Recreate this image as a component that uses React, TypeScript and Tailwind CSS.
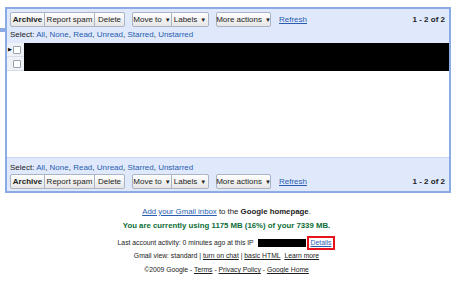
import React from "react";

const btn =
  "h-[15px] px-[5px] flex items-center border border-[#a9b4c4] bg-gradient-to-b from-white to-[#e6e6e6] text-[8px] text-[#222] leading-none whitespace-nowrap";

function Caret() {
  return <span className="ml-[3px] text-[6px]">▼</span>;
}

function Toolbar() {
  return (
    <div className="flex items-center pl-[3px] pr-[4px] h-[15px]">
      <div className="flex">
        <button className={`${btn} font-bold rounded-l-[2px] w-[35px] justify-center`}>Archive</button>
        <button className={`${btn} -ml-px w-[51px] justify-center`}>Report spam</button>
        <button className={`${btn} -ml-px rounded-r-[2px] w-[31px] justify-center`}>Delete</button>
      </div>
      <div className="flex ml-[7px]">
        <button className={`${btn} rounded-l-[2px] w-[40px] justify-center`}>
          Move to<Caret />
        </button>
        <button className={`${btn} -ml-px rounded-r-[2px] w-[38px] justify-center`}>
          Labels<Caret />
        </button>
      </div>
      <button className={`${btn} ml-[7px] rounded-[2px] w-[55px] justify-center`}>
        More actions<Caret />
      </button>
      <a className="ml-[8px] text-[8px] text-[#2a5db0] underline">Refresh</a>
      <span className="ml-auto text-[8px] font-bold text-[#222]">1 - 2 of 2</span>
    </div>
  );
}

function SelectLine() {
  const items = ["All", "None", "Read", "Unread", "Starred", "Unstarred"];
  return (
    <div className="pl-[3px] text-[8px] leading-none text-[#222]">
      Select:{" "}
      {items.map((t, i) => (
        <span key={t}>
          <a className="text-[#2a5db0]">{t}</a>
          {i < items.length - 1 ? ", " : ""}
        </span>
      ))}
    </div>
  );
}

function Row({ first }: { first?: boolean }) {
  return (
    <div className="flex h-[14px]">
      <div className="w-[17px] flex items-center bg-[#eef1f6] border-b border-[#d6dde8]">
        <span className="w-[4px] text-[5px] leading-none text-black pl-[1px]">{first ? "▶" : ""}</span>
        <span className="ml-[2px] w-[8px] h-[8px] border border-[#9aa3ad] rounded-[1px] bg-white" />
      </div>
      <div className="flex-1 bg-black" />
    </div>
  );
}

export default function App() {
  return (
    <div className="w-[453px] h-[285px] bg-white font-['Liberation_Sans',Arial,sans-serif] overflow-hidden">
      <div className="flex items-start pt-[7px] pr-[2px]">
        <div className="mt-[21px] w-[5px] h-[4px] bg-[#8aabe4]" />
        <div className="flex-1 border-2 border-[#8aabe4] bg-[#dfe9fb]">
          <div className="pt-[3px]">
            <Toolbar />
          </div>
          <div className="h-[16px] flex items-center">
            <SelectLine />
          </div>
          <div className="bg-white h-[114px]">
            <Row first />
            <Row />
          </div>
          <div className="border-t border-[#c9d8f2] pt-[4px] pb-[2px]">
            <div className="h-[11px] flex items-center">
              <SelectLine />
            </div>
            <div className="mt-[1px]">
              <Toolbar />
            </div>
          </div>
        </div>
      </div>

      <div className="flex flex-col items-center text-[#222] mt-[15px]">
        <div className="text-[7.8px] leading-none">
          <a className="text-[#2a5db0] underline">Add your Gmail inbox</a> to the{" "}
          <b>Google homepage</b>.
        </div>
        <div className="mt-[6px] text-[7.8px] leading-none font-bold text-[#0b6e35]">
          You are currently using 1175 MB (16%) of your 7339 MB.
        </div>
        <div className="mt-[6px] flex items-center text-[6.8px] leading-none">
          <span>Last account activity: 0 minutes ago at this IP</span>
          <span className="ml-[4px] w-[48px] h-[8px] bg-black" />
          <span className="ml-[1px] border-[2px] border-[#e8141b] px-[2px] py-[2px]">
            <a className="text-[#2a5db0] underline">Details</a>
          </span>
        </div>
        <div className="mt-[3px] text-[6.8px] leading-none">
          Gmail view: standard | <a className="underline">turn on chat</a> |{" "}
          <a className="underline">basic HTML</a>&nbsp; <a className="underline">Learn more</a>
        </div>
        <div className="mt-[7px] text-[6.8px] leading-none">
          ©2009 Google - <a className="underline">Terms</a> - <a className="underline">Privacy Policy</a> -{" "}
          <a className="underline">Google Home</a>
        </div>
      </div>
    </div>
  );
}
